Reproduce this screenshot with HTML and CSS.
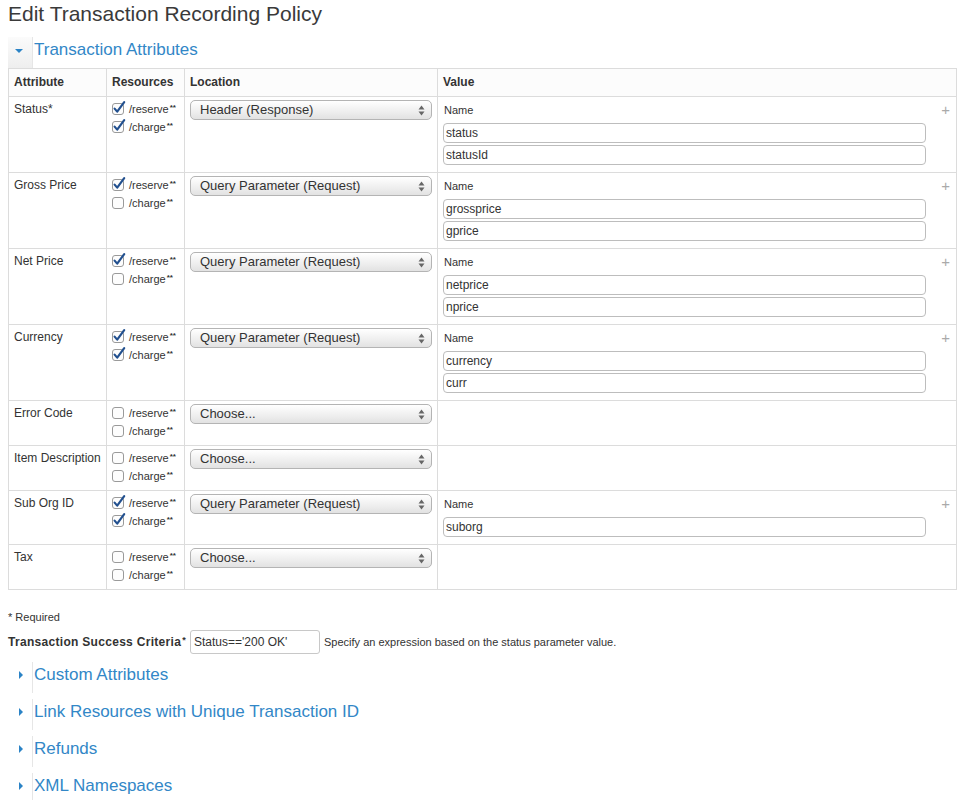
FILE: index.html
```html
<!DOCTYPE html>
<html>
<head>
<meta charset="utf-8">
<link rel="stylesheet" href="styles.css">
</head>
<body>
<h1 class="title">Edit Transaction Recording Policy</h1>

<div class="sec-head open">
  <span class="caret-box"><span class="caret-down"></span></span>
  <span class="sec-title">Transaction Attributes</span>
</div>

<table class="attrs">
  <colgroup>
    <col class="c-attr"><col class="c-res"><col class="c-loc"><col class="c-val">
  </colgroup>
  <thead>
    <tr><th>Attribute</th><th>Resources</th><th>Location</th><th>Value</th></tr>
  </thead>
  <tbody>
    <tr>
      <td class="attr">Status*</td>
      <td class="res">
        <div class="cb"><svg class="box" width="15" height="14" viewBox="0 0 15 14"><rect x="0.5" y="2.5" width="11" height="11" rx="2.5" class="box-r"/><path d="M2.6 7.6 L5.2 10.6 L12.2 1.2" class="tick"/></svg><span>/reserve<sup>**</sup></span></div>
        <div class="cb"><svg class="box" width="15" height="14" viewBox="0 0 15 14"><rect x="0.5" y="2.5" width="11" height="11" rx="2.5" class="box-r"/><path d="M2.6 7.6 L5.2 10.6 L12.2 1.2" class="tick"/></svg><span>/charge<sup>**</sup></span></div>
      </td>
      <td class="loc"><div class="sel"><span>Header (Response)</span><svg class="arr" width="7" height="11" viewBox="0 0 7 11"><path d="M0.5 4.5 L3.5 0.5 L6.5 4.5 Z M0.5 6.5 L3.5 10.5 L6.5 6.5 Z"/></svg></div></td>
      <td class="val">
        <div class="name-row"><span>Name</span><span class="plus">+</span></div>
        <div class="inp">status</div>
        <div class="inp">statusId</div>
      </td>
    </tr>
    <tr>
      <td class="attr">Gross Price</td>
      <td class="res">
        <div class="cb"><svg class="box" width="15" height="14" viewBox="0 0 15 14"><rect x="0.5" y="2.5" width="11" height="11" rx="2.5" class="box-r"/><path d="M2.6 7.6 L5.2 10.6 L12.2 1.2" class="tick"/></svg><span>/reserve<sup>**</sup></span></div>
        <div class="cb"><svg class="box" width="15" height="14" viewBox="0 0 15 14"><rect x="0.5" y="2.5" width="11" height="11" rx="2.5" class="box-r"/></svg><span>/charge<sup>**</sup></span></div>
      </td>
      <td class="loc"><div class="sel"><span>Query Parameter (Request)</span><svg class="arr" width="7" height="11" viewBox="0 0 7 11"><path d="M0.5 4.5 L3.5 0.5 L6.5 4.5 Z M0.5 6.5 L3.5 10.5 L6.5 6.5 Z"/></svg></div></td>
      <td class="val">
        <div class="name-row"><span>Name</span><span class="plus">+</span></div>
        <div class="inp">grossprice</div>
        <div class="inp">gprice</div>
      </td>
    </tr>
    <tr>
      <td class="attr">Net Price</td>
      <td class="res">
        <div class="cb"><svg class="box" width="15" height="14" viewBox="0 0 15 14"><rect x="0.5" y="2.5" width="11" height="11" rx="2.5" class="box-r"/><path d="M2.6 7.6 L5.2 10.6 L12.2 1.2" class="tick"/></svg><span>/reserve<sup>**</sup></span></div>
        <div class="cb"><svg class="box" width="15" height="14" viewBox="0 0 15 14"><rect x="0.5" y="2.5" width="11" height="11" rx="2.5" class="box-r"/></svg><span>/charge<sup>**</sup></span></div>
      </td>
      <td class="loc"><div class="sel"><span>Query Parameter (Request)</span><svg class="arr" width="7" height="11" viewBox="0 0 7 11"><path d="M0.5 4.5 L3.5 0.5 L6.5 4.5 Z M0.5 6.5 L3.5 10.5 L6.5 6.5 Z"/></svg></div></td>
      <td class="val">
        <div class="name-row"><span>Name</span><span class="plus">+</span></div>
        <div class="inp">netprice</div>
        <div class="inp">nprice</div>
      </td>
    </tr>
    <tr>
      <td class="attr">Currency</td>
      <td class="res">
        <div class="cb"><svg class="box" width="15" height="14" viewBox="0 0 15 14"><rect x="0.5" y="2.5" width="11" height="11" rx="2.5" class="box-r"/><path d="M2.6 7.6 L5.2 10.6 L12.2 1.2" class="tick"/></svg><span>/reserve<sup>**</sup></span></div>
        <div class="cb"><svg class="box" width="15" height="14" viewBox="0 0 15 14"><rect x="0.5" y="2.5" width="11" height="11" rx="2.5" class="box-r"/><path d="M2.6 7.6 L5.2 10.6 L12.2 1.2" class="tick"/></svg><span>/charge<sup>**</sup></span></div>
      </td>
      <td class="loc"><div class="sel"><span>Query Parameter (Request)</span><svg class="arr" width="7" height="11" viewBox="0 0 7 11"><path d="M0.5 4.5 L3.5 0.5 L6.5 4.5 Z M0.5 6.5 L3.5 10.5 L6.5 6.5 Z"/></svg></div></td>
      <td class="val">
        <div class="name-row"><span>Name</span><span class="plus">+</span></div>
        <div class="inp">currency</div>
        <div class="inp">curr</div>
      </td>
    </tr>
    <tr>
      <td class="attr">Error Code</td>
      <td class="res">
        <div class="cb"><svg class="box" width="15" height="14" viewBox="0 0 15 14"><rect x="0.5" y="2.5" width="11" height="11" rx="2.5" class="box-r"/></svg><span>/reserve<sup>**</sup></span></div>
        <div class="cb"><svg class="box" width="15" height="14" viewBox="0 0 15 14"><rect x="0.5" y="2.5" width="11" height="11" rx="2.5" class="box-r"/></svg><span>/charge<sup>**</sup></span></div>
      </td>
      <td class="loc"><div class="sel"><span>Choose...</span><svg class="arr" width="7" height="11" viewBox="0 0 7 11"><path d="M0.5 4.5 L3.5 0.5 L6.5 4.5 Z M0.5 6.5 L3.5 10.5 L6.5 6.5 Z"/></svg></div></td>
      <td class="val"></td>
    </tr>
    <tr>
      <td class="attr">Item Description</td>
      <td class="res">
        <div class="cb"><svg class="box" width="15" height="14" viewBox="0 0 15 14"><rect x="0.5" y="2.5" width="11" height="11" rx="2.5" class="box-r"/></svg><span>/reserve<sup>**</sup></span></div>
        <div class="cb"><svg class="box" width="15" height="14" viewBox="0 0 15 14"><rect x="0.5" y="2.5" width="11" height="11" rx="2.5" class="box-r"/></svg><span>/charge<sup>**</sup></span></div>
      </td>
      <td class="loc"><div class="sel"><span>Choose...</span><svg class="arr" width="7" height="11" viewBox="0 0 7 11"><path d="M0.5 4.5 L3.5 0.5 L6.5 4.5 Z M0.5 6.5 L3.5 10.5 L6.5 6.5 Z"/></svg></div></td>
      <td class="val"></td>
    </tr>
    <tr>
      <td class="attr">Sub Org ID</td>
      <td class="res">
        <div class="cb"><svg class="box" width="15" height="14" viewBox="0 0 15 14"><rect x="0.5" y="2.5" width="11" height="11" rx="2.5" class="box-r"/><path d="M2.6 7.6 L5.2 10.6 L12.2 1.2" class="tick"/></svg><span>/reserve<sup>**</sup></span></div>
        <div class="cb"><svg class="box" width="15" height="14" viewBox="0 0 15 14"><rect x="0.5" y="2.5" width="11" height="11" rx="2.5" class="box-r"/><path d="M2.6 7.6 L5.2 10.6 L12.2 1.2" class="tick"/></svg><span>/charge<sup>**</sup></span></div>
      </td>
      <td class="loc"><div class="sel"><span>Query Parameter (Request)</span><svg class="arr" width="7" height="11" viewBox="0 0 7 11"><path d="M0.5 4.5 L3.5 0.5 L6.5 4.5 Z M0.5 6.5 L3.5 10.5 L6.5 6.5 Z"/></svg></div></td>
      <td class="val">
        <div class="name-row"><span>Name</span><span class="plus">+</span></div>
        <div class="inp">suborg</div>
      </td>
    </tr>
    <tr>
      <td class="attr">Tax</td>
      <td class="res">
        <div class="cb"><svg class="box" width="15" height="14" viewBox="0 0 15 14"><rect x="0.5" y="2.5" width="11" height="11" rx="2.5" class="box-r"/></svg><span>/reserve<sup>**</sup></span></div>
        <div class="cb"><svg class="box" width="15" height="14" viewBox="0 0 15 14"><rect x="0.5" y="2.5" width="11" height="11" rx="2.5" class="box-r"/></svg><span>/charge<sup>**</sup></span></div>
      </td>
      <td class="loc"><div class="sel"><span>Choose...</span><svg class="arr" width="7" height="11" viewBox="0 0 7 11"><path d="M0.5 4.5 L3.5 0.5 L6.5 4.5 Z M0.5 6.5 L3.5 10.5 L6.5 6.5 Z"/></svg></div></td>
      <td class="val"></td>
    </tr>
  </tbody>
</table>

<p class="required">* Required</p>

<div class="criteria">
  <span class="crit-label">Transaction Success Criteria<sup>*</sup></span>
  <div class="crit-input">Status=='200 OK'</div>
  <span class="crit-help">Specify an expression based on the status parameter value.</span>
</div>

<div class="sec-head">
  <span class="caret-box"><span class="caret-right"></span></span>
  <span class="sec-title">Custom Attributes</span>
</div>
<div class="sec-head">
  <span class="caret-box"><span class="caret-right"></span></span>
  <span class="sec-title">Link Resources with Unique Transaction ID</span>
</div>
<div class="sec-head">
  <span class="caret-box"><span class="caret-right"></span></span>
  <span class="sec-title">Refunds</span>
</div>
<div class="sec-head">
  <span class="caret-box"><span class="caret-right"></span></span>
  <span class="sec-title">XML Namespaces</span>
</div>
</body>
</html>
```

FILE: styles.css
```css
* { box-sizing: border-box; }

body {
  margin: 0;
  padding: 0 8px;
  font-family: "Liberation Sans", Arial, sans-serif;
  color: #333;
  background: #fff;
}

.title {
  margin: 0 0 9px;
  font-size: 21px;
  font-weight: normal;
  line-height: 28px;
  color: #3a3a3a;
}

.sec-head {
  display: flex;
  height: 31px;
  margin-bottom: 6px;
}
.sec-head.open { margin-bottom: 0; }

.caret-box {
  width: 25px;
  flex: none;
  border-right: 1px solid #e6e6e6;
  position: relative;
}
.open .caret-box {
  background: linear-gradient(#fbfbfb, #eeeeee);
}

.caret-down {
  position: absolute;
  left: 7px;
  top: 12px;
  width: 0;
  height: 0;
  border-left: 4px solid transparent;
  border-right: 4px solid transparent;
  border-top: 4px solid #2b83c6;
}
.caret-right {
  position: absolute;
  left: 11px;
  top: 9px;
  width: 0;
  height: 0;
  border-top: 4px solid transparent;
  border-bottom: 4px solid transparent;
  border-left: 4px solid #2b83c6;
}

.sec-title {
  padding: 2px 0 0 1px;
  font-size: 17px;
  line-height: 22px;
  color: #3287c7;
}

.attrs {
  width: 100%;
  border-collapse: collapse;
  border: 1px solid #dcdcdc;
  font-size: 12px;
}
.c-attr { width: 98px; }
.c-res { width: 78px; }
.c-loc { width: 253px; }

.attrs th, .attrs td {
  border: 1px solid #dcdcdc;
  text-align: left;
  vertical-align: top;
}
.attrs th {
  padding: 5px 5px;
  line-height: 17px;
  font-weight: bold;
  font-size: 12px;
  color: #333;
  background: #fcfcfc;
}
.attrs td {
  padding: 3px 5px 5px;
  line-height: 18px;
}
.attrs td.val { padding-bottom: 7px; }

.cb {
  display: flex;
  align-items: center;
  height: 18px;
  font-size: 11px;
  color: #333;
  white-space: nowrap;
}
.cb .box {
  flex: none;
  margin: -2px 2px 0 0;
  overflow: visible;
}
.box-r {
  fill: #fdfdfd;
  stroke: #9a9a9a;
}
.tick {
  fill: none;
  stroke: #22508f;
  stroke-width: 2.2;
  stroke-linecap: round;
  stroke-linejoin: round;
}
.cb sup {
  font-size: 8px;
  font-weight: bold;
  vertical-align: 3px;
  line-height: 0;
  margin-left: 1px;
}

.sel {
  display: flex;
  align-items: center;
  justify-content: space-between;
  height: 20px;
  padding: 0 6px 0 9px;
  border: 1px solid #b4b4b4;
  border-radius: 5px;
  background: linear-gradient(#ffffff, #f1f1f1 50%, #e2e2e2);
  font-size: 13px;
  color: #333;
}
.sel .arr { fill: #666; }

.name-row {
  display: flex;
  justify-content: space-between;
  align-items: center;
  height: 20px;
  margin-bottom: 3px;
  font-size: 11px;
  padding-left: 1px;
}
.plus {
  font-size: 15px;
  color: #aaa;
  margin-right: 1px;
}
.inp {
  height: 20px;
  width: 483px;
  margin-bottom: 2px;
  padding-left: 2px;
  border: 1px solid #bdbdbd;
  border-radius: 4px;
  font-size: 12px;
  line-height: 18px;
  color: #333;
}
.inp:last-child { margin-bottom: 0; }

.required {
  margin: 19px 0 5px;
  font-size: 11px;
  line-height: 16px;
}

.criteria {
  display: flex;
  align-items: center;
  height: 24px;
  margin-bottom: 8px;
}
.crit-label {
  width: 182px;
  flex: none;
  font-size: 12px;
  font-weight: bold;
  letter-spacing: 0.3px;
}
.crit-label sup {
  font-size: 9px;
  vertical-align: 3px;
  line-height: 0;
  margin-left: 1px;
}
.crit-input {
  width: 130px;
  height: 24px;
  padding-left: 3px;
  border: 1px solid #c8c8c8;
  border-radius: 3px;
  font-size: 12px;
  line-height: 22px;
}
.crit-help {
  margin-left: 4px;
  font-size: 11px;
}
```
